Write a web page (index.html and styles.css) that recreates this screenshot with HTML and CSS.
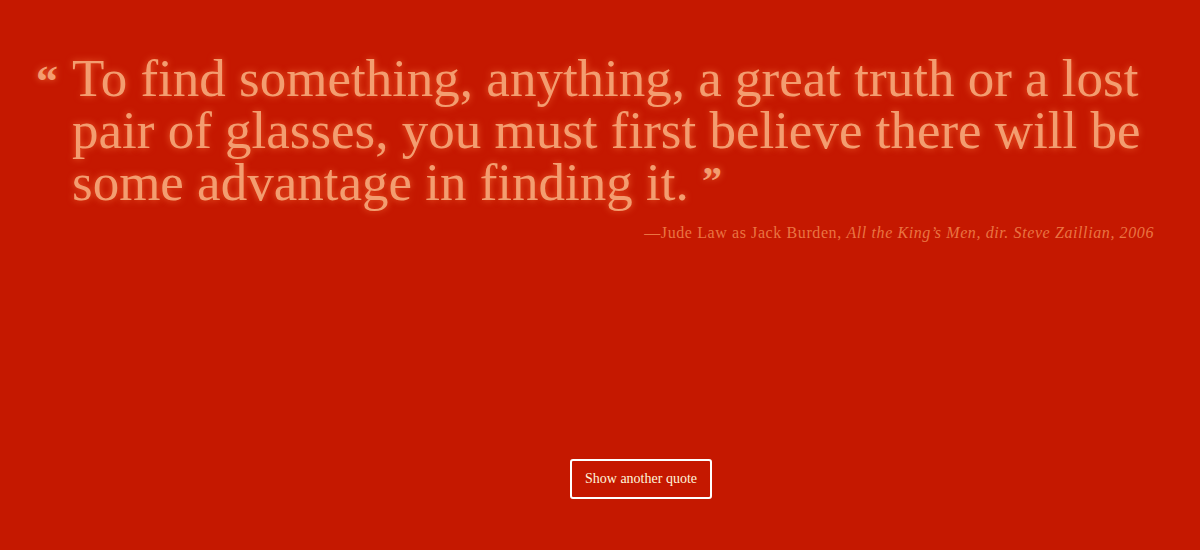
FILE: index.html
```html
<!DOCTYPE html>
<html lang="en">
<head>
<meta charset="utf-8">
<title>Quote</title>
<link rel="stylesheet" href="styles.css">
</head>
<body>
<main class="page">
  <figure class="quote">
    <blockquote class="quote-body">
      <span class="mark mark-open">&ldquo;</span>
      <p class="quote-text">To find something, anything, a great truth or a lost pair of glasses, you must first believe there will be some advantage in finding it. <span class="mark mark-close">&rdquo;</span></p>
    </blockquote>
    <figcaption class="attribution">&mdash;Jude Law as Jack Burden, <cite>All the King&rsquo;s Men, dir. Steve Zaillian, 2006</cite></figcaption>
  </figure>
  <div class="actions">
    <button class="btn" type="button">Show another quote</button>
  </div>
</main>
</body>
</html>
```

FILE: styles.css
```css
html, body {
  margin: 0;
  padding: 0;
  height: 100%;
}
body {
  background: #c51800;
  font-family: "Liberation Serif", "DejaVu Serif", serif;
}
.page {
  height: 550px;
  display: flex;
  flex-direction: column;
  padding: 0 46px 0 36px;
  box-sizing: border-box;
}
.quote {
  margin: 0;
  padding-top: 52px;
}
.quote-body {
  margin: 0;
  display: flex;
  align-items: flex-start;
}
.mark {
  color: #f39d70;
  text-shadow: 0 0 7px rgba(255, 130, 70, 0.7);
  font-weight: bold;
}
.mark-open {
  width: 36px;
  flex: none;
  font-size: 44px;
  line-height: 1;
  padding-top: 8px;
}
.quote-text {
  margin: 0;
  flex: 1;
  font-size: 53px;
  line-height: 52px;
  color: #f39d70;
  text-shadow: 0 0 7px rgba(255, 120, 60, 0.75);
}
.mark-close {
  font-size: 40px;
  line-height: 1;
  vertical-align: 6px;
}
.attribution {
  margin-top: 16px;
  text-align: right;
  font-size: 16px;
  letter-spacing: 0.6px;
  color: #ea7442;
}
.attribution cite {
  font-style: italic;
}
.actions {
  margin-top: auto;
  padding: 0 0 51px 92px;
  display: flex;
  justify-content: center;
}
.btn {
  width: 142px;
  height: 40px;
  background: transparent;
  border: 2px solid #ffffff;
  border-radius: 3px;
  color: #fff6dc;
  font-family: "Liberation Serif", "DejaVu Serif", serif;
  font-size: 14px;
  cursor: pointer;
}
```
